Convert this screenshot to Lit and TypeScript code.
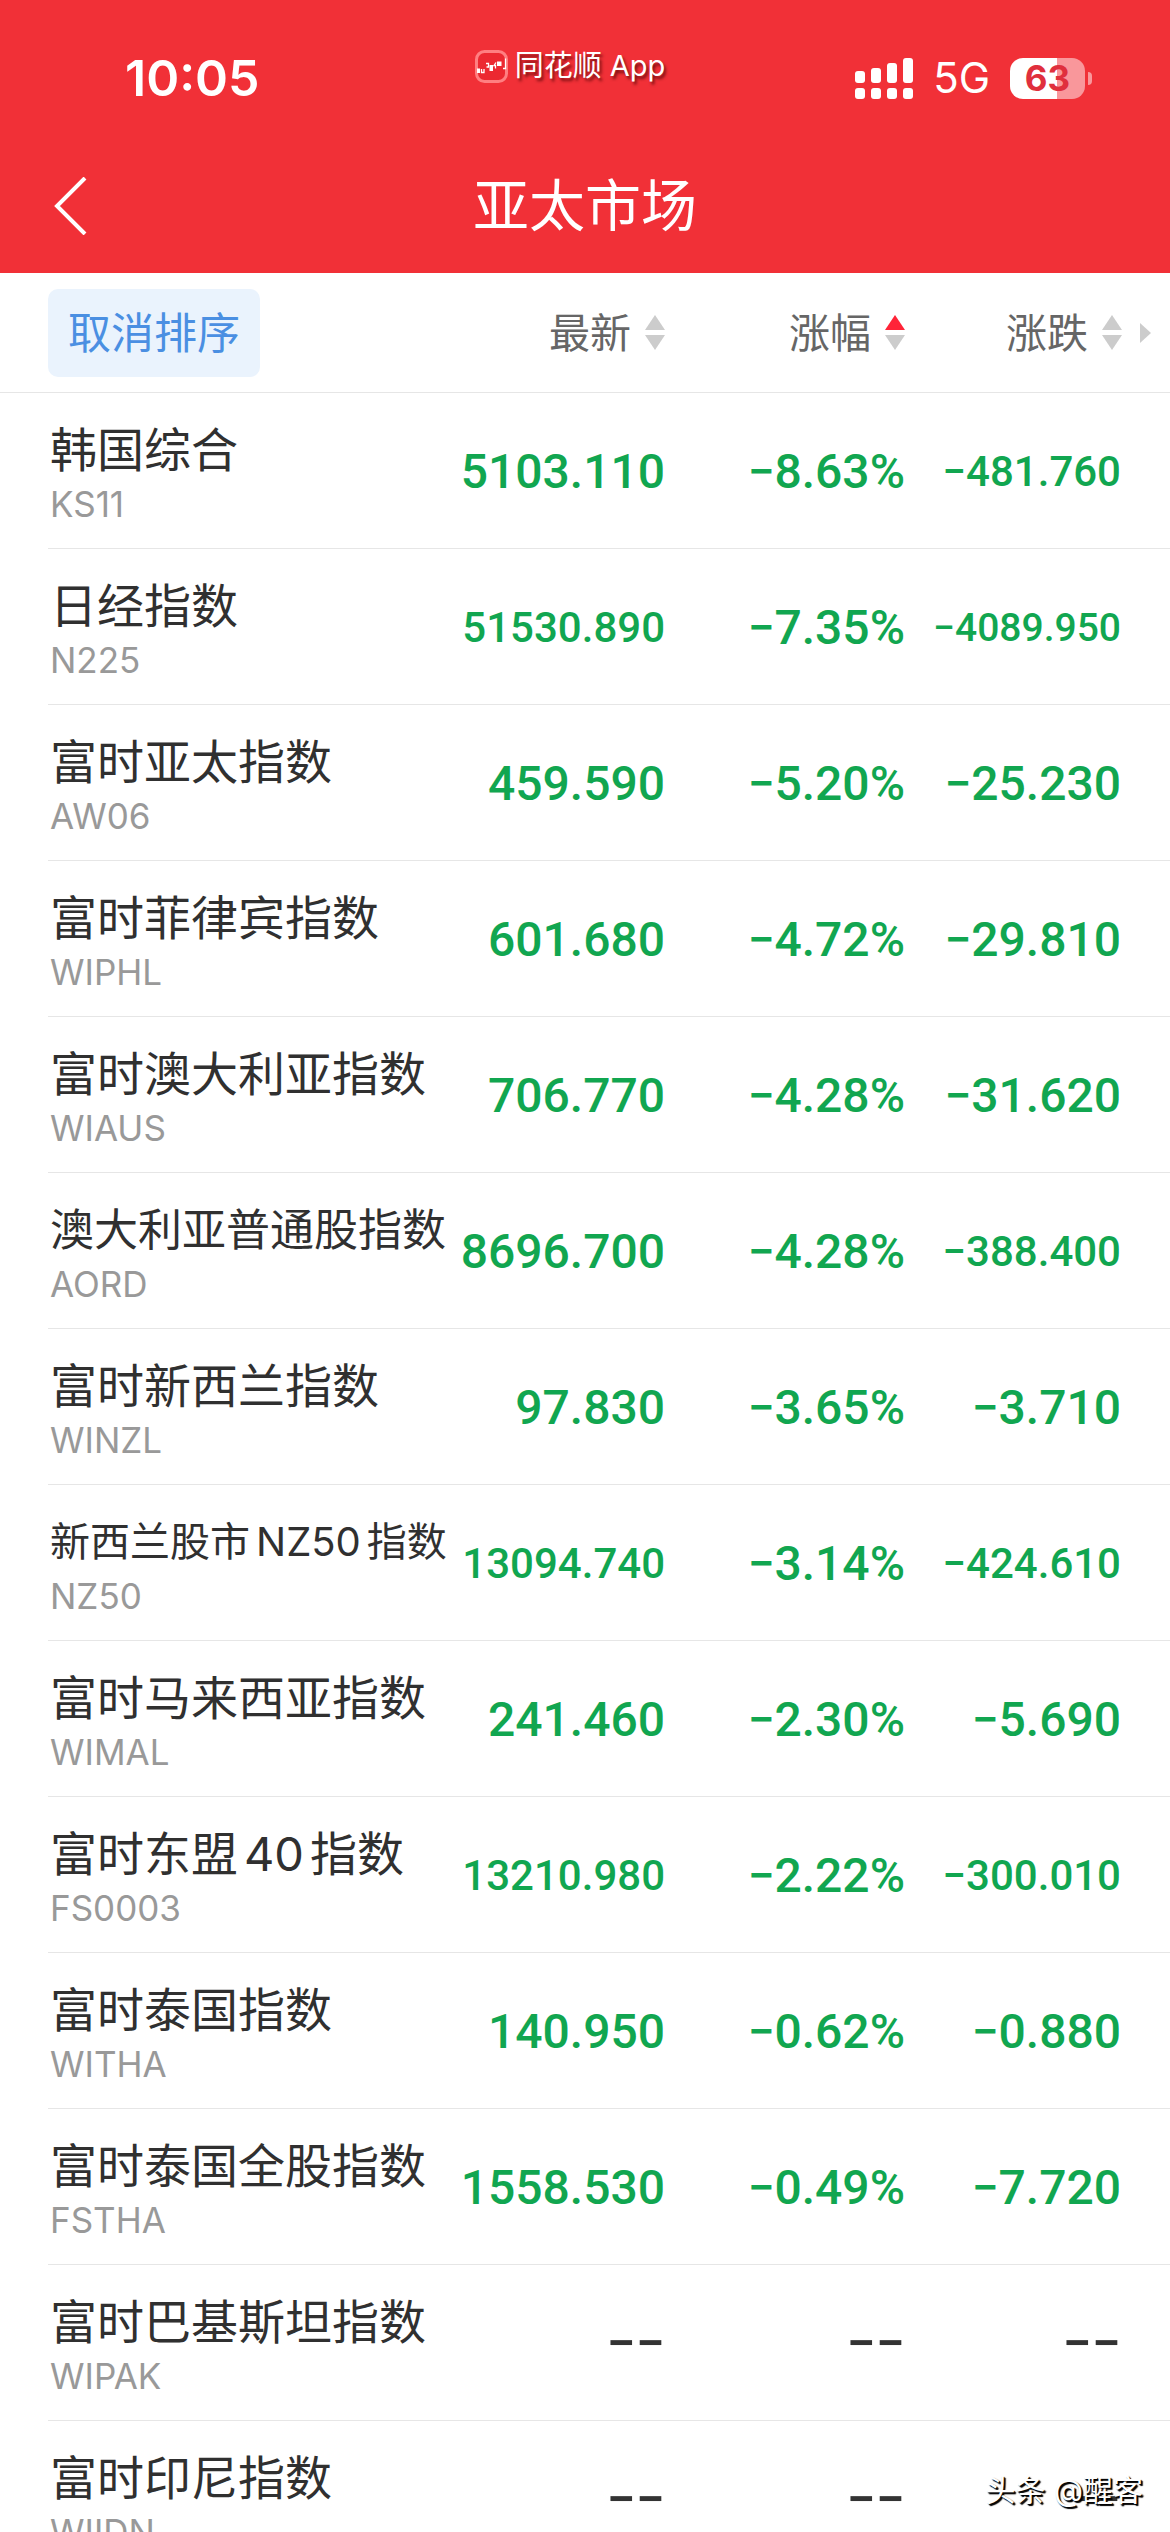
import { LitElement, html, css, svg } from "lit";
import { customElement, property } from "lit/decorators.js";
import { classMap } from "lit/directives/class-map.js";

interface Quote {
  name: string;
  code: string;
  last: string;
  percent: string;
  change: string;
}

type Direction = "none" | "up" | "down";

const QUOTES: Quote[] = [
  { name: "韩国综合", code: "KS11", last: "5103.110", percent: "−8.63%", change: "−481.760" },
  { name: "日经指数", code: "N225", last: "51530.890", percent: "−7.35%", change: "−4089.950" },
  { name: "富时亚太指数", code: "AW06", last: "459.590", percent: "−5.20%", change: "−25.230" },
  { name: "富时菲律宾指数", code: "WIPHL", last: "601.680", percent: "−4.72%", change: "−29.810" },
  { name: "富时澳大利亚指数", code: "WIAUS", last: "706.770", percent: "−4.28%", change: "−31.620" },
  { name: "澳大利亚普通股指数", code: "AORD", last: "8696.700", percent: "−4.28%", change: "−388.400" },
  { name: "富时新西兰指数", code: "WINZL", last: "97.830", percent: "−3.65%", change: "−3.710" },
  { name: "新西兰股市NZ50指数", code: "NZ50", last: "13094.740", percent: "−3.14%", change: "−424.610" },
  { name: "富时马来西亚指数", code: "WIMAL", last: "241.460", percent: "−2.30%", change: "−5.690" },
  { name: "富时东盟40指数", code: "FS0003", last: "13210.980", percent: "−2.22%", change: "−300.010" },
  { name: "富时泰国指数", code: "WITHA", last: "140.950", percent: "−0.62%", change: "−0.880" },
  { name: "富时泰国全股指数", code: "FSTHA", last: "1558.530", percent: "−0.49%", change: "−7.720" },
  { name: "富时巴基斯坦指数", code: "WIPAK", last: "−−", percent: "−−", change: "−−" },
  { name: "富时印尼指数", code: "WIIDN", last: "−−", percent: "−−", change: "−−" },
];

@customElement("status-bar")
export class StatusBar extends LitElement {
  static styles = css`
    :host {
      display: grid;
      grid-template-columns: 1fr auto 1fr;
      height: 156px;
      box-sizing: border-box;
      padding: 0 78px 0 48px;
      color: #fff;
      font-family: Inter, "Noto Sans CJK SC", sans-serif;
    }
    .time {
      padding: 48px 0 0 77px;
      font-size: 50px;
      line-height: 60px;
      font-weight: 600;
    }
    .brand {
      display: flex;
      align-items: center;
      align-self: start;
      gap: 7px;
      padding-top: 46px;
      font-size: 29px;
      line-height: 40px;
      text-shadow: 2px 3px 3px rgba(70, 0, 0, 0.7);
    }
    .right {
      display: flex;
      justify-content: flex-end;
      align-items: center;
      align-self: start;
      padding-top: 53px;
      gap: 20px;
    }
    .net {
      font-size: 42px;
      line-height: 50px;
    }
    .battery {
      display: flex;
      align-items: center;
      gap: 3px;
    }
    .cell {
      width: 75px;
      border-radius: 13px;
      text-align: center;
      font-size: 35px;
      line-height: 41px;
      font-weight: 700;
      color: #e02f3d;
      background: linear-gradient(90deg, #fff 63%, #f9979b 63%);
    }
    .nub {
      width: 4px;
      height: 13px;
      border-radius: 0 4px 4px 0;
      background: #f9979b;
    }
    svg {
      display: block;
    }
  `;

  render() {
    const bars = [
      [0, 13],
      [16, 10],
      [32, 5],
      [48, 0],
    ];
    return html`
      <div class="time">10:05</div>
      <div class="brand">
        <svg width="33" height="33" viewBox="0 0 33 33" aria-hidden="true">
          <rect x="1.5" y="1.5" width="30" height="30" rx="8" fill="#ec2931" stroke="#ff7f81" stroke-width="3" />
          <path d="M2 18.500h3v4.500h-3zM14.500 15h3.500v6h-3.500zM22 11.500h4.500v4.500h-4.500z" fill="#fff" />
          <path d="M6.500 19v3.500h2.500v-3.500M11 13.500h2.500v3.500h-2M21 12.500l-2 3h1.500v3M28 18.500h2.500v-10" stroke="#fff" stroke-width="1.300" fill="none" />
        </svg>
        <span>同花顺 App</span>
      </div>
      <div class="right">
        <svg width="58" height="41" viewBox="0 0 58 41" fill="#fff" aria-hidden="true">
          ${bars.map(
            ([x, y]) => svg`
              <rect x=${x} y=${y} width="10" height=${25 - y} rx="3" />
              <rect x=${x} y="30" width="10" height="11" rx="3" />`
          )}
        </svg>
        <span class="net">5G</span>
        <span class="battery"><span class="cell">63</span><span class="nub"></span></span>
      </div>
    `;
  }
}

@customElement("sort-header")
export class SortHeader extends LitElement {
  static styles = css`
    :host {
      display: inline-block;
      vertical-align: top;
    }
    .sort {
      display: flex;
      align-items: center;
      gap: 14px;
      margin: 0;
      padding: 0;
      border: 0;
      background: none;
      color: #666;
      font: 400 41px/60px Inter, "Noto Sans CJK SC", sans-serif;
      white-space: nowrap;
    }
    .arrow {
      fill: #ccc;
    }
    .active {
      fill: #ff2438;
    }
  `;

  @property() label = "";
  @property() direction: Direction = "none";

  render() {
    return html`
      <button class="sort" type="button">
        <span>${this.label}</span>
        <svg width="20" height="35" viewBox="0 0 20 35" aria-hidden="true">
          <path class=${classMap({ arrow: true, active: this.direction === "up" })} d="M10 0L20 15H0z" />
          <path class=${classMap({ arrow: true, active: this.direction === "down" })} d="M10 35L20 20H0z" />
        </svg>
      </button>
    `;
  }
}

@customElement("app-root")
export class AppRoot extends LitElement {
  static styles = css`
    :host {
      display: block;
      height: 100vh;
      overflow: hidden;
      position: relative;
      background: #fff;
      font-family: Inter, "Noto Sans CJK SC", sans-serif;
    }
    .top {
      background: #f13037;
      color: #fff;
    }
    .nav {
      display: grid;
      grid-template-columns: 80px 1fr 80px;
      align-items: center;
      height: 117px;
      padding: 0 32px;
      box-sizing: border-box;
    }
    .back {
      display: flex;
      margin: 0;
      padding: 0 0 17px 22px;
      border: 0;
      background: none;
    }
    .title {
      margin: 0;
      padding-bottom: 17px;
      text-align: center;
      font-size: 56px;
      line-height: 80px;
      font-weight: 400;
    }
    .quotes {
      width: 100%;
      table-layout: fixed;
      border-collapse: separate;
      border-spacing: 0;
    }
    .col-last {
      width: 215px;
    }
    .col-percent {
      width: 240px;
    }
    .col-change {
      width: 265px;
    }
    th,
    td {
      box-sizing: border-box;
      padding: 0;
      font-weight: 400;
      text-align: right;
      white-space: nowrap;
    }
    .head {
      height: 120px;
      border-bottom: 1px solid #e6e6e6;
    }
    .head-name {
      padding-left: 48px;
      text-align: left;
    }
    .cancel {
      display: block;
      height: 88px;
      margin: 0;
      padding: 0 20px;
      border: 0;
      border-radius: 10px;
      background: #eaf3fd;
      color: #4a8fe2;
      font: 400 43px/84px Inter, "Noto Sans CJK SC", sans-serif;
    }
    .head-change {
      display: flex;
      justify-content: flex-end;
      align-items: center;
      gap: 18px;
      padding-right: 19px;
    }
    .name,
    .value {
      height: 156px;
    }
    .name {
      padding: 6px 0 0 50px;
      text-align: left;
      background: linear-gradient(#e6e6e6, #e6e6e6) right bottom / calc(100% - 48px) 1px no-repeat;
    }
    .value {
      padding-top: 2px;
      border-bottom: 1px solid #e6e6e6;
      color: #11a650;
      font-family: Roboto, sans-serif;
      font-weight: 500;
      font-size: 48px;
    }
    .change {
      padding-right: 49px;
    }
    .medium {
      font-size: 42px;
    }
    .small {
      font-size: 39px;
    }
    .empty {
      color: #333;
      font-size: 52px;
    }
    .title-text {
      display: block;
      font-size: 47px;
      line-height: 60px;
      color: #303030;
    }
    .fit-nine {
      font-size: 44px;
    }
    .fit-long {
      font-size: 40px;
    }
    .latin {
      margin: 0 6px;
    }
    .code {
      display: block;
      font-size: 35px;
      line-height: 48px;
      color: #999;
    }
    .credit {
      position: absolute;
      right: 27px;
      bottom: 20px;
      color: #fff;
      font-size: 30px;
      line-height: 44px;
      text-shadow: 1px 1px 1px #000, 2px 2px 1px #000;
    }
  `;

  private nameClasses(name: string) {
    return classMap({
      "title-text": true,
      "fit-nine": name.length === 9,
      "fit-long": name.length > 9,
    });
  }

  /* Latin letters and digits inside a Chinese name get a little air on both sides. */
  private nameParts(name: string) {
    return name.split(/([A-Z0-9]+)/).map((part, i) => (i % 2 ? html`<span class="latin">${part}</span>` : part));
  }

  private valueClasses(value: string, column: string) {
    return classMap({
      value: true,
      [column]: true,
      empty: value === "−−",
      medium: (column === "last" && value.length === 9) || (column === "change" && value.length === 8),
      small: column === "change" && value.length > 8,
    });
  }

  render() {
    return html`
      <header class="top">
        <status-bar></status-bar>
        <nav class="nav">
          <button class="back" type="button" aria-label="返回">
            <svg width="33" height="58" viewBox="0 0 33 58" fill="none" stroke="#fff" stroke-width="4" aria-hidden="true">
              <path d="M31 1L3 29L31 57" />
            </svg>
          </button>
          <h1 class="title">亚太市场</h1>
        </nav>
      </header>
      <table class="quotes">
        <colgroup>
          <col />
          <col class="col-last" />
          <col class="col-percent" />
          <col class="col-change" />
        </colgroup>
        <thead>
          <tr>
            <th class="head head-name" scope="col"><button class="cancel" type="button">取消排序</button></th>
            <th class="head" scope="col"><sort-header label="最新"></sort-header></th>
            <th class="head" scope="col"><sort-header label="涨幅" direction="up"></sort-header></th>
            <th class="head" scope="col">
              <div class="head-change">
                <sort-header label="涨跌"></sort-header>
                <svg width="11" height="20" viewBox="0 0 11 20" fill="#ccc" aria-hidden="true"><path d="M0 0L11 10L0 20z" /></svg>
              </div>
            </th>
          </tr>
        </thead>
        <tbody>
          ${QUOTES.map(
            (q) => html`
              <tr>
                <td class="name">
                  <span class=${this.nameClasses(q.name)}>${this.nameParts(q.name)}</span>
                  <span class="code">${q.code}</span>
                </td>
                <td class=${this.valueClasses(q.last, "last")}>${q.last}</td>
                <td class=${this.valueClasses(q.percent, "percent")}>${q.percent}</td>
                <td class=${this.valueClasses(q.change, "change")}>${q.change}</td>
              </tr>
            `
          )}
        </tbody>
      </table>
      <div class="credit">头条 @醒客</div>
    `;
  }
}
